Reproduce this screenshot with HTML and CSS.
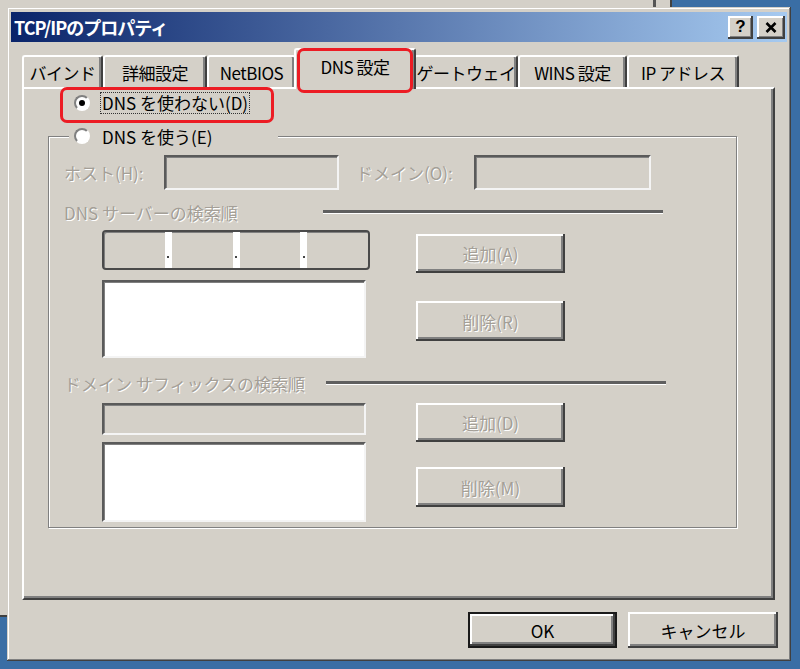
FILE: index.html
```html
<!DOCTYPE html>
<html lang="ja">
<head>
    <meta charset="UTF-8">
    <meta name="viewport" content="width=device-width, initial-scale=1.0">
    <title>TCP/IPのプロパティ</title>
    <link rel="stylesheet" href="styles.css">
</head>
<body>

    <div class="bgwin">
        <div class="bgwin-rule"></div>
    </div>

    <div class="dialog">
        <div class="titlebar">
            <span class="title">TCP/IPのプロパティ</span>
            <div class="cap-btns">
                <button class="cap-btn cap-help">?</button>
                <button class="cap-btn cap-close">
                    <svg width="12" height="11" viewBox="0 0 12 11">
                        <path d="M1.5 1 L10.5 10 M10.5 1 L1.5 10" stroke="#000" stroke-width="2.6" fill="none"/>
                    </svg>
                </button>
            </div>
        </div>

        <div class="tabs">
            <div class="tab tab-bind">バインド</div>
            <div class="tab tab-adv">詳細設定</div>
            <div class="tab tab-nb">NetBIOS</div>
            <div class="tab tab-dns selected">DNS 設定<span class="mark mark-tab"></span></div>
            <div class="tab tab-gw">ゲートウェイ</div>
            <div class="tab tab-wins">WINS 設定</div>
            <div class="tab tab-ip">IP アドレス</div>
        </div>

        <div class="panel">
            <div class="radio-row">
                <span class="radio checked"></span>
                <span class="focus">DNS を使わない(D)</span>
                <span class="mark mark-radio"></span>
            </div>

            <fieldset class="group">
                <legend class="group-legend">
                    <span class="radio"></span>
                    <span>DNS を使う(E)</span>
                </legend>

                <div class="field-row">
                    <span class="dis lbl-host">ホスト(H):</span>
                    <div class="edit in-host"></div>
                    <span class="dis lbl-dom">ドメイン(O):</span>
                    <div class="edit in-dom"></div>
                </div>

                <div class="sect">
                    <span class="dis sect-lbl">DNS サーバーの検索順</span>
                    <div class="sect-rule"></div>
                </div>

                <div class="order">
                    <div class="order-left">
                        <div class="ipbox">
                            <div class="ip-seg"></div>
                            <div class="ip-dot"><i></i></div>
                            <div class="ip-seg"></div>
                            <div class="ip-dot"><i></i></div>
                            <div class="ip-seg"></div>
                            <div class="ip-dot"><i></i></div>
                            <div class="ip-seg"></div>
                        </div>
                        <div class="edit white list-dns"></div>
                    </div>
                    <div class="order-right">
                        <button class="btn dis btn-add-a">追加(A)</button>
                        <button class="btn dis btn-del-r">削除(R)</button>
                    </div>
                </div>

                <div class="sect sect-2">
                    <span class="dis sect-lbl sect-lbl-2">ドメイン サフィックスの検索順</span>
                    <div class="sect-rule"></div>
                </div>

                <div class="order order-2">
                    <div class="order-left gap-sm">
                        <div class="edit in-suffix"></div>
                        <div class="edit white list-suffix"></div>
                    </div>
                    <div class="order-right">
                        <button class="btn dis btn-add-d">追加(D)</button>
                        <button class="btn dis btn-del-m">削除(M)</button>
                    </div>
                </div>
            </fieldset>
        </div>

        <div class="footer">
            <button class="btn btn-ok">OK</button>
            <button class="btn btn-cancel">キャンセル</button>
        </div>
    </div>

</body>
</html>
```

FILE: styles.css
```css
* {
    box-sizing: border-box;
}

body {
    position: relative;
    width: 800px;
    height: 669px;
    margin: 0;
    overflow: hidden;
    background-color: #3a6ea5;
    font-family: "Noto Sans CJK JP", "Liberation Sans", sans-serif;
    font-size: 17px;
    color: #000;
}

/* window behind the dialog */
.bgwin {
    position: absolute;
    left: 0;
    top: 0;
    width: 672px;
    height: 617px;
    background-color: #d4d0c8;
    border-right: 2px solid #404040;
    border-bottom: 2px solid #404040;
}

.bgwin-rule {
    position: absolute;
    left: 653px;
    top: 0;
    width: 3px;
    height: 8px;
    background-color: #555;
}

.dialog {
    position: absolute;
    left: 7px;
    top: 7px;
    width: 784px;
    height: 654px;
    padding: 5px 4px 4px 4px;
    display: flex;
    flex-direction: column;
    background-color: #d4d0c8;
    box-shadow: inset -1px -1px #404040, inset 1px 1px #d4d0c8, inset -2px -2px #808080, inset 2px 2px #fff;
}

.titlebar {
    height: 30px;
    display: flex;
    align-items: center;
    justify-content: space-between;
    padding: 0 2px 0 3px;
    background: linear-gradient(to right, #0a246a, #a6caf0);
}

.title {
    color: #fff;
    font-weight: bold;
    font-size: 18px;
    letter-spacing: -1px;
}

.cap-btns {
    display: flex;
    gap: 4px;
}

.cap-btn {
    height: 23px;
    padding: 0;
    border: none;
    display: flex;
    align-items: center;
    justify-content: center;
    background-color: #d4d0c8;
    box-shadow: inset -2px -2px #404040, inset 2px 2px #fff, inset -3px -3px #808080;
}

.cap-help {
    width: 25px;
    font-family: "Liberation Sans", sans-serif;
    font-weight: bold;
    font-size: 17px;
}

.cap-close {
    width: 28px;
}

/* tabs */
.tabs {
    position: relative;
    z-index: 1;
    display: flex;
    align-items: flex-end;
    height: 41px;
    margin: 6px 0 -2px 11px;
}

.tab {
    position: relative;
    height: 32px;
    margin-bottom: 2px;
    display: flex;
    align-items: center;
    justify-content: center;
    background-color: #d4d0c8;
    border-top: 2px solid #fff;
    border-left: 2px solid #fff;
    border-right: 2px solid #404040;
    border-radius: 3px 3px 0 0;
    box-shadow: inset -2px 0 #808080;
    white-space: nowrap;
    letter-spacing: -0.5px;
}

.tab-bind { width: 81px; }
.tab-adv { width: 104px; }
.tab-nb { width: 89px; }
.tab-gw { width: 104px; }
.tab-wins { width: 109px; }
.tab-ip { width: 112px; }

.tab.selected {
    z-index: 2;
    width: 122px;
    height: 41px;
    margin: 0 -2px;
    padding-bottom: 6px;
}

.mark {
    position: absolute;
    border: 3px solid #ec1c24;
    border-radius: 7px;
}

.mark-tab {
    left: 1px;
    right: 1px;
    top: -2px;
    bottom: -4px;
}

/* page */
.panel {
    height: 513px;
    margin: 0 12px 0 11px;
    padding: 3px 36px 0 24px;
    border-top: 2px solid #fff;
    border-left: 2px solid #fff;
    border-right: 2px solid #404040;
    border-bottom: 2px solid #404040;
    box-shadow: inset -2px -2px #808080;
}

.radio-row {
    position: relative;
    display: flex;
    align-items: center;
    gap: 10px;
    height: 22px;
    margin-left: 26px;
}

.mark-radio {
    left: -14px;
    top: -5px;
    width: 214px;
    height: 36px;
}

.radio {
    position: relative;
    flex: none;
    width: 16px;
    height: 16px;
    border-radius: 50%;
    border: 2px solid;
    border-color: #808080 #fff #fff #808080;
    background-color: #fff;
}

.radio.checked::after {
    content: "";
    position: absolute;
    left: 3px;
    top: 3px;
    width: 6px;
    height: 6px;
    border-radius: 50%;
    background-color: #000;
}

.focus {
    padding: 0 1px;
    line-height: 20px;
    border: 1px dotted #333;
}

.group {
    width: 689px;
    height: 403px;
    margin: 11px 0 0 0;
    padding: 8px 0 0 15px;
    min-width: 0;
    border: 1px solid #808080;
    box-shadow: 1px 1px 0 #fff, inset 1px 1px 0 #fff;
}

.group-legend {
    width: 209px;
    height: 22px;
    margin-left: 5px;
    padding: 0 0 0 5px;
    display: flex;
    align-items: center;
    gap: 12px;
    background-color: #d4d0c8;
}

.dis {
    color: #a49f97;
    text-shadow: 1px 1px 0 #fff;
}

.field-row {
    display: flex;
    align-items: center;
    height: 35px;
}

.lbl-host { width: 100px; }
.lbl-dom { width: 118px; margin-left: 17px; }

.edit {
    border: 2px solid;
    border-color: #5a5a5a #f4f4f4 #f4f4f4 #5a5a5a;
    box-shadow: inset 1px 1px #808080;
    background-color: #d4d0c8;
}

.edit.white {
    background-color: #fff;
}

.in-host { width: 175px; height: 35px; }
.in-dom { width: 177px; height: 35px; }

.sect {
    display: flex;
    align-items: center;
    height: 18px;
    margin-top: 13px;
}

.sect-lbl {
    width: 259px;
    white-space: nowrap;
}

.sect-lbl-2 { width: 262px; }

.sect-rule {
    width: 340px;
    height: 4px;
    border-top: 3px solid #5f5f5f;
    border-bottom: 1px solid #fff;
}

.order {
    display: grid;
    grid-template-columns: 268px 149px;
    column-gap: 46px;
    margin: 9px 0 0 38px;
}

.order-left {
    display: flex;
    flex-direction: column;
    gap: 10px;
}

.order-left.gap-sm {
    gap: 7px;
}

.order-right {
    display: flex;
    flex-direction: column;
}

.ipbox {
    display: flex;
    width: 268px;
    height: 40px;
    border: 2px solid #4a4a4a;
    border-radius: 4px;
    box-shadow: inset 1px 1px #808080;
    background-color: #d4d0c8;
}

.ip-seg {
    flex: 1;
}

.ip-dot {
    width: 7px;
    display: flex;
    align-items: flex-end;
    justify-content: center;
    padding-bottom: 10px;
    background-color: #fff;
}

.ip-dot i {
    width: 2px;
    height: 2px;
    background-color: #444;
}

.list-dns { width: 264px; height: 78px; }

.sect-2 { margin-top: 16px; }
.order-2 { margin-top: 11px; }

.in-suffix { width: 264px; height: 32px; }
.list-suffix { width: 264px; height: 80px; }

.btn {
    padding: 0;
    border: none;
    display: flex;
    align-items: center;
    justify-content: center;
    font: inherit;
    background-color: #d4d0c8;
    box-shadow: inset -2px -2px #404040, inset 2px 2px #fff, inset -4px -4px #808080;
}

.btn.dis {
    color: #a49f97;
}

.btn-add-a { height: 39px; margin-top: 4px; }
.btn-del-r { height: 40px; margin-top: 28px; }
.btn-add-d { height: 39px; }
.btn-del-m { height: 40px; margin-top: 25px; }

.footer {
    display: flex;
    justify-content: flex-end;
    gap: 11px;
    margin: 12px 9px 0 0;
}

.btn-ok {
    width: 149px;
    height: 36px;
    border: 2px solid #1a1a1a;
}

.btn-cancel {
    width: 150px;
    height: 36px;
}
```
